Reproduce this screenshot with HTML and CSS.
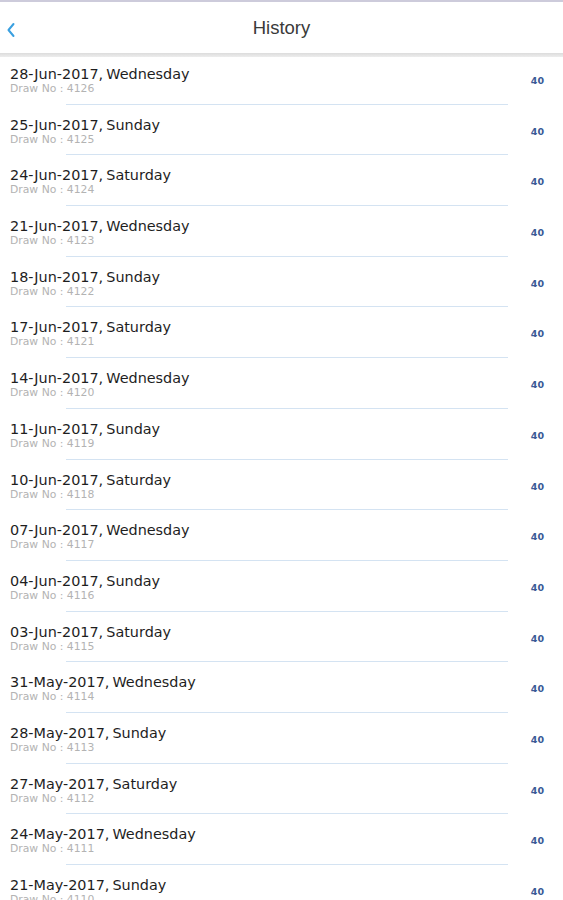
FILE: index.html
```html
<!DOCTYPE html>
<html>
<head>
<meta charset="utf-8">
<link rel="stylesheet" href="styles.css">
</head>
<body>
<div class="topstrip"></div>
<header class="nav">
  <svg class="back" width="10" height="16" viewBox="0 0 10 16"><path d="M7.5 2 L2.5 8 L7.5 14" fill="none" stroke="#3aa0e0" stroke-width="2" stroke-linecap="round" stroke-linejoin="round"/></svg>
  <h1 class="title">History</h1>
</header>
<div class="navshadow"></div>
<ul class="list">
  <li class="item"><div class="main"><div class="texts"><div class="date">28-Jun-2017, Wednesday</div><div class="draw">Draw No : 4126</div></div><span class="num">40</span></div><div class="sep"></div></li>
  <li class="item"><div class="main"><div class="texts"><div class="date">25-Jun-2017, Sunday</div><div class="draw">Draw No : 4125</div></div><span class="num">40</span></div><div class="sep"></div></li>
  <li class="item"><div class="main"><div class="texts"><div class="date">24-Jun-2017, Saturday</div><div class="draw">Draw No : 4124</div></div><span class="num">40</span></div><div class="sep"></div></li>
  <li class="item"><div class="main"><div class="texts"><div class="date">21-Jun-2017, Wednesday</div><div class="draw">Draw No : 4123</div></div><span class="num">40</span></div><div class="sep"></div></li>
  <li class="item"><div class="main"><div class="texts"><div class="date">18-Jun-2017, Sunday</div><div class="draw">Draw No : 4122</div></div><span class="num">40</span></div><div class="sep"></div></li>
  <li class="item"><div class="main"><div class="texts"><div class="date">17-Jun-2017, Saturday</div><div class="draw">Draw No : 4121</div></div><span class="num">40</span></div><div class="sep"></div></li>
  <li class="item"><div class="main"><div class="texts"><div class="date">14-Jun-2017, Wednesday</div><div class="draw">Draw No : 4120</div></div><span class="num">40</span></div><div class="sep"></div></li>
  <li class="item"><div class="main"><div class="texts"><div class="date">11-Jun-2017, Sunday</div><div class="draw">Draw No : 4119</div></div><span class="num">40</span></div><div class="sep"></div></li>
  <li class="item"><div class="main"><div class="texts"><div class="date">10-Jun-2017, Saturday</div><div class="draw">Draw No : 4118</div></div><span class="num">40</span></div><div class="sep"></div></li>
  <li class="item"><div class="main"><div class="texts"><div class="date">07-Jun-2017, Wednesday</div><div class="draw">Draw No : 4117</div></div><span class="num">40</span></div><div class="sep"></div></li>
  <li class="item"><div class="main"><div class="texts"><div class="date">04-Jun-2017, Sunday</div><div class="draw">Draw No : 4116</div></div><span class="num">40</span></div><div class="sep"></div></li>
  <li class="item"><div class="main"><div class="texts"><div class="date">03-Jun-2017, Saturday</div><div class="draw">Draw No : 4115</div></div><span class="num">40</span></div><div class="sep"></div></li>
  <li class="item"><div class="main"><div class="texts"><div class="date">31-May-2017, Wednesday</div><div class="draw">Draw No : 4114</div></div><span class="num">40</span></div><div class="sep"></div></li>
  <li class="item"><div class="main"><div class="texts"><div class="date">28-May-2017, Sunday</div><div class="draw">Draw No : 4113</div></div><span class="num">40</span></div><div class="sep"></div></li>
  <li class="item"><div class="main"><div class="texts"><div class="date">27-May-2017, Saturday</div><div class="draw">Draw No : 4112</div></div><span class="num">40</span></div><div class="sep"></div></li>
  <li class="item"><div class="main"><div class="texts"><div class="date">24-May-2017, Wednesday</div><div class="draw">Draw No : 4111</div></div><span class="num">40</span></div><div class="sep"></div></li>
  <li class="item"><div class="main"><div class="texts"><div class="date">21-May-2017, Sunday</div><div class="draw">Draw No : 4110</div></div><span class="num">40</span></div><div class="sep"></div></li>
</ul>
</body>
</html>
```
FILE: styles.css
```css
html, body {
  margin: 0;
  padding: 0;
  background: #ffffff;
  overflow: hidden;
  height: 900px;
}
body {
  font-family: "DejaVu Sans", Verdana, sans-serif;
}
.topstrip {
  height: 2px;
  background: #cdcbdb;
}
.nav {
  height: 51px;
  display: flex;
  align-items: center;
  justify-content: center;
  position: relative;
  background: #ffffff;
}
.back {
  position: absolute;
  left: 6px;
  top: 20px;
}
.title {
  margin: 0;
  font-family: "Liberation Sans", Arial, sans-serif;
  font-weight: normal;
  font-size: 18.5px;
  color: #3a3a3a;
  padding-top: 1px;
}
.navshadow {
  height: 4px;
  background: linear-gradient(#dcdcdc, #ededed);
}
.list {
  list-style: none;
  margin: 0;
  padding: 0;
}
.item {
  height: 50.7px;
  display: flex;
  flex-direction: column;
  box-sizing: border-box;
}
.main {
  display: flex;
  align-items: center;
  padding: 9px 19px 0 10px;
}
.texts {
  flex: 1;
}
.date {
  font-size: 14.4px;
  line-height: 17px;
  color: #1e1e1e;
  word-spacing: -1.5px;
}
.draw {
  font-size: 10.8px;
  line-height: 11px;
  color: #b3b3b3;
}
.num {
  font-size: 9.5px;
  font-weight: bold;
  color: #3a5a96;
  padding-top: 1px;
}
.sep {
  margin: auto 55px 3px 66px;
  height: 1px;
  background: #d4e3f2;
}
```
